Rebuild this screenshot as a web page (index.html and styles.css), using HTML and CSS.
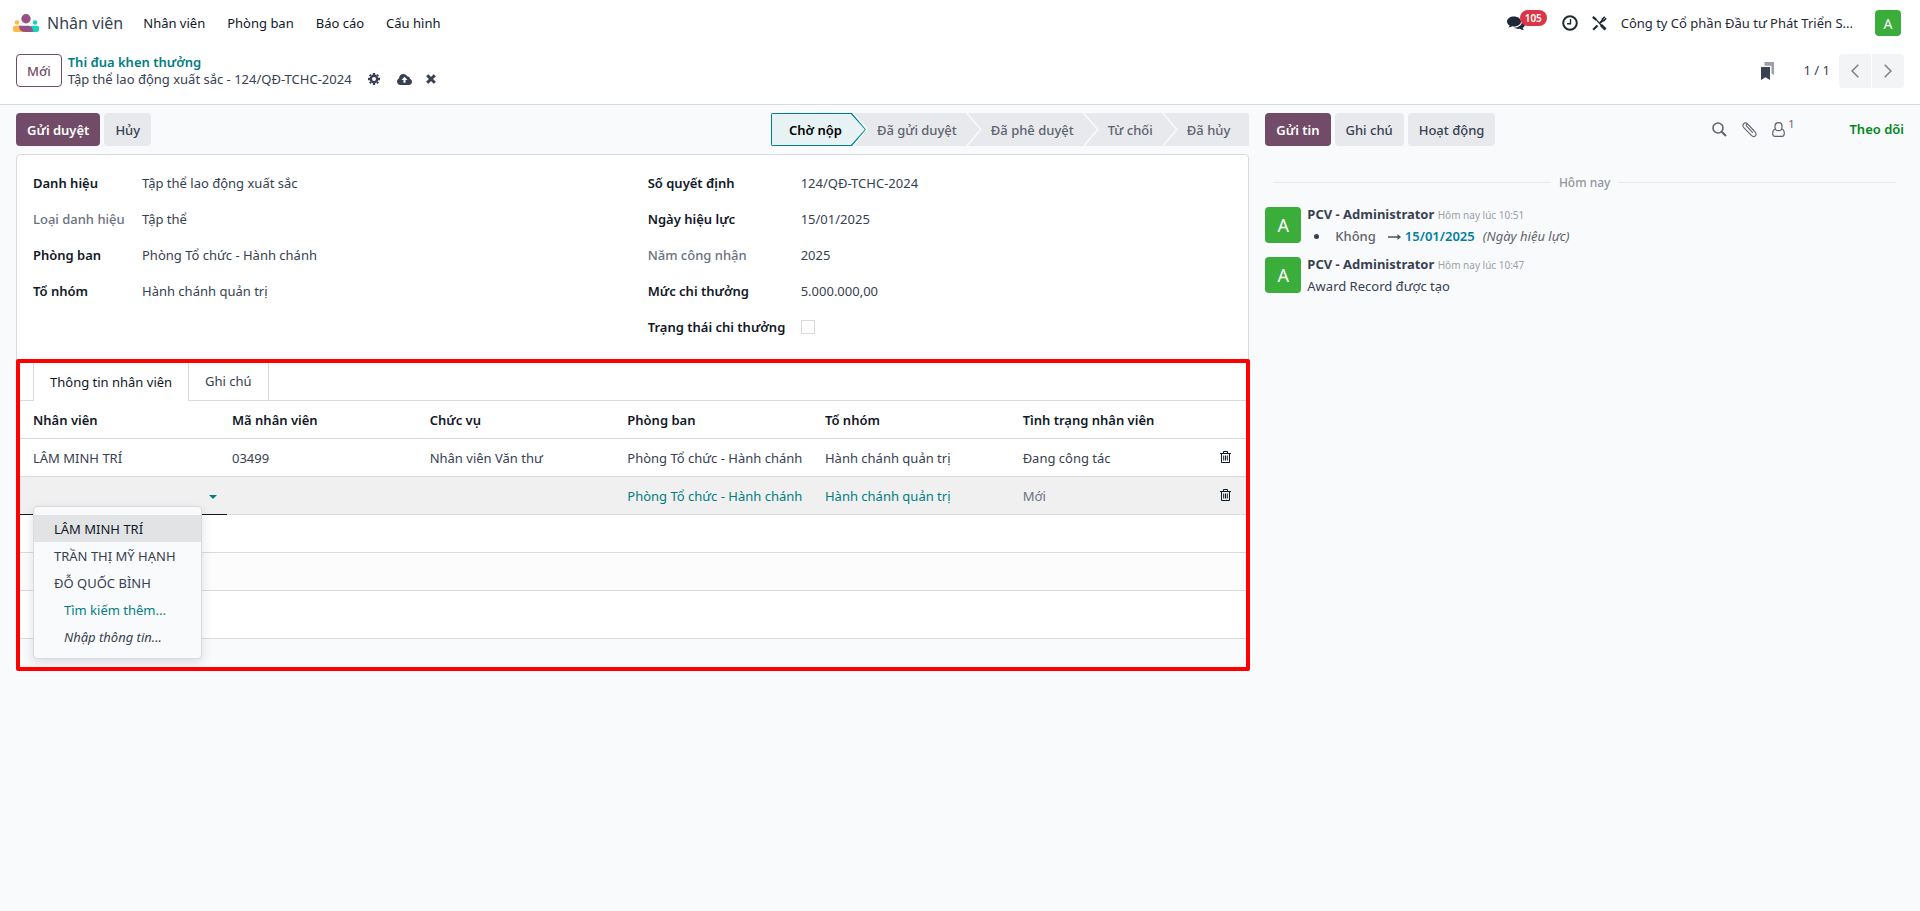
FILE: index.html
```html
<!DOCTYPE html>
<html lang="vi">

<head>
    <meta charset="UTF-8">
    <meta name="viewport" content="width=device-width, initial-scale=1.0">
    <title>Nhân viên - Thi đua khen thưởng</title>
    <link rel="stylesheet" href="styles.css">
</head>

<body>
    <header class="navbar">
        <a class="brand" href="#">
            <svg class="brand-logo" width="26" height="18" viewBox="0 0 26 18">
                <circle cx="4" cy="8.500" r="2.300" fill="#fbb945"/>
                <circle cx="22" cy="8.500" r="2.300" fill="#1ad3bb"/>
                <path d="M0 13.500Q0 11.700 2 11.700H8L16 18H2Q0 18 0 16Z" fill="#fbb945"/>
                <path d="M26 13.500Q26 11.700 24 11.700H18L16 18H24Q26 18 26 16Z" fill="#1ad3bb"/>
                <circle cx="13" cy="4.700" r="4.700" fill="#985184"/>
                <path d="M6 11.700H16Q20 12 20 18H13Q6 18 6 11.700Z" fill="#985184"/>
            </svg>
            <span>Nhân viên</span>
        </a>
        <nav class="menu">
            <a href="#">Nhân viên</a>
            <a href="#">Phòng ban</a>
            <a href="#">Báo cáo</a>
            <a href="#">Cấu hình</a>
        </nav>
        <div class="systray">
            <button class="tray-btn messages" aria-label="Tin nhắn">
                <svg width="18" height="15" viewBox="0 0 18 15" fill="#1f2937">
                    <path d="M7 0.500C3.100 0.500 0 2.600 0 5.500C0 7.100 1 8.500 2.600 9.400C2.400 10.200 1.900 10.900 1.300 11.500C2.900 11.400 4.200 10.900 5.200 10.300C5.800 10.400 6.400 10.500 7 10.500C10.900 10.500 14 8.300 14 5.500S10.900 0.500 7 0.500Z"/>
                    <path d="M15.200 4.700C15.300 8.600 11.800 11.600 7 11.700C8.200 12.500 9.800 12.900 11.400 12.900C12 12.900 12.500 12.900 13 12.800C14 13.600 15.400 14.100 16.800 14.100C16.200 13.500 15.800 12.900 15.600 12.100C17 11.300 18 10 18 8.600C18 7 16.900 5.600 15.200 4.700Z"/>
                </svg>
                <span class="badge">105</span>
            </button>
            <button class="tray-btn" aria-label="Hoạt động">
                <svg width="16" height="16" viewBox="0 0 16 16" fill="none" stroke="#1f2937" stroke-width="2">
                    <circle cx="8" cy="8" r="6.800"/>
                    <path d="M8.500 4V8.700H5" stroke-width="1.400"/>
                </svg>
            </button>
            <button class="tray-btn" aria-label="Công cụ">
                <svg width="15" height="15" viewBox="0 0 15 15" fill="none" stroke="#1f2937">
                    <path d="M0.800 0.800L4.500 4" stroke-width="2.200"/>
                    <path d="M4.500 4L9.500 9.500" stroke-width="1.200"/>
                    <path d="M9 9L13.500 13.500" stroke-width="2.800"/>
                    <path d="M1.200 13.800L5.500 9.500M8 7L10.500 4.500" stroke-width="2.200"/>
                    <path d="M12.800 0.800L10.400 3.200V4.600H11.800L14.200 2.200" stroke-width="1.600"/>
                </svg>
            </button>
            <button class="tray-btn company">Công ty Cổ phần Đầu tư Phát Triển S...</button>
            <button class="avatar avatar-sm">A</button>
        </div>
    </header>

    <div class="control-panel">
        <button class="btn btn-outline">Mới</button>
        <div class="breadcrumb">
            <a href="#">Thi đua khen thưởng</a>
            <div class="breadcrumb-current">
                <span class="record-name">Tập thể lao động xuất sắc - 124/QĐ-TCHC-2024</span>
                <button class="icon-btn" aria-label="Thao tác">
                    <svg width="12" height="12" viewBox="0 0 12 12" fill="none" stroke="#374151">
                        <circle cx="6" cy="6" r="3.200" stroke-width="2.400"/>
                        <path d="M6 0V2M6 10V12M0 6H2M10 6H12M1.800 1.800L3 3M9 9L10.200 10.200M10.200 1.800L9 3M3 9L1.800 10.200" stroke-width="2.300"/>
                    </svg>
                </button>
                <button class="icon-btn save" aria-label="Lưu">
                    <svg width="15" height="11" viewBox="0 0 15 11">
                        <path d="M3.500 11C1.500 11 0 9.500 0 7.600C0 6.200 0.800 5 2 4.500C2 2 3.900 0 6.400 0C8.200 0 9.700 1 10.400 2.600C11.900 2.200 13.200 3.400 12.900 5C14.200 5.300 15 6.400 15 7.800C15 9.600 13.600 11 11.800 11Z" fill="#374151"/>
                        <path d="M7.500 2.800L4.600 5.900H6.500V8.800H8.500V5.900H10.400Z" fill="#fff"/>
                    </svg>
                </button>
                <button class="icon-btn discard" aria-label="Hủy bỏ">
                    <svg width="10" height="10" viewBox="0 0 10 10" stroke="#374151" stroke-width="3">
                        <path d="M1.200 1.200L8.800 8.800M8.800 1.200L1.200 8.800"/>
                    </svg>
                </button>
            </div>
        </div>
        <div class="pager">
            <button class="icon-btn bookmark" aria-label="Đánh dấu">
                <svg width="13" height="18" viewBox="0 0 13 18">
                    <path d="M3.500 0H13V13L10.500 11.500V3.800H3.500Z" fill="#9a9fab"/>
                    <path d="M0 5H9V18L4.500 15.200L0 18Z" fill="#374151"/>
                </svg>
            </button>
            <span class="pager-value">1 / 1</span>
            <div class="pager-buttons">
                <button aria-label="Trước">
                    <svg width="8" height="14" viewBox="0 0 8 14" fill="none" stroke="#7c7f85" stroke-width="1.500"><path d="M7.300 0.700L1 7L7.300 13.300"/></svg>
                </button>
                <button aria-label="Sau">
                    <svg width="8" height="14" viewBox="0 0 8 14" fill="none" stroke="#7c7f85" stroke-width="1.500"><path d="M0.700 0.700L7 7L0.700 13.300"/></svg>
                </button>
            </div>
        </div>
    </div>

    <main class="content">
        <section class="form-view">
            <div class="statusbar">
                <div class="btn-group">
                    <button class="btn btn-primary">Gửi duyệt</button>
                    <button class="btn btn-secondary">Hủy</button>
                </div>
                <div class="status-steps">
                    <button class="step active"><span>Chờ nộp</span></button>
                    <button class="step">Đã gửi duyệt</button>
                    <button class="step">Đã phê duyệt</button>
                    <button class="step">Từ chối</button>
                    <button class="step">Đã hủy</button>
                </div>
            </div>

            <div class="sheet">
                <div class="groups">
                    <dl class="group group-left">
                        <dt>Danh hiệu</dt>
                        <dd>Tập thể lao động xuất sắc</dd>
                        <dt class="readonly">Loại danh hiệu</dt>
                        <dd>Tập thể</dd>
                        <dt>Phòng ban</dt>
                        <dd>Phòng Tổ chức - Hành chánh</dd>
                        <dt>Tổ nhóm</dt>
                        <dd>Hành chánh quản trị</dd>
                    </dl>
                    <dl class="group group-right">
                        <dt>Số quyết định</dt>
                        <dd>124/QĐ-TCHC-2024</dd>
                        <dt>Ngày hiệu lực</dt>
                        <dd>15/01/2025</dd>
                        <dt class="readonly">Năm công nhận</dt>
                        <dd>2025</dd>
                        <dt>Mức chi thưởng</dt>
                        <dd>5.000.000,00</dd>
                        <dt><label for="paid">Trạng thái chi thưởng</label></dt>
                        <dd><input type="checkbox" id="paid"></dd>
                    </dl>
                </div>

                <div class="notebook">
                    <div class="tabs" role="tablist">
                        <button class="tab active" role="tab">Thông tin nhân viên</button>
                        <button class="tab" role="tab">Ghi chú</button>
                    </div>
                    <table class="list">
                        <thead>
                            <tr>
                                <th class="col-employee">Nhân viên</th>
                                <th>Mã nhân viên</th>
                                <th>Chức vụ</th>
                                <th>Phòng ban</th>
                                <th>Tổ nhóm</th>
                                <th>Tình trạng nhân viên</th>
                                <th class="col-action"></th>
                            </tr>
                        </thead>
                        <tbody>
                            <tr>
                                <td>LÂM MINH TRÍ</td>
                                <td>03499</td>
                                <td>Nhân viên Văn thư</td>
                                <td>Phòng Tổ chức - Hành chánh</td>
                                <td>Hành chánh quản trị</td>
                                <td>Đang công tác</td>
                                <td>
                                    <button class="icon-btn" aria-label="Xóa">
                                        <svg width="11" height="12" viewBox="0 0 11 12" fill="none" stroke="#111827">
                                            <path d="M0 2.500H11M3.500 2.500V0.500H7.500V2.500M1.500 2.500V11.500H9.500V2.500M3.700 4.500V9.500M5.500 4.500V9.500M7.300 4.500V9.500"/>
                                        </svg>
                                    </button>
                                </td>
                            </tr>
                            <tr class="editing">
                                <td class="cell-edit">
                                    <div class="many2one">
                                        <input type="text" aria-label="Nhân viên">
                                        <span class="caret"></span>
                                    </div>
                                    <ul class="dropdown">
                                        <li><a class="selected" href="#">LÂM MINH TRÍ</a></li>
                                        <li><a href="#">TRẦN THỊ MỸ HẠNH</a></li>
                                        <li><a href="#">ĐỖ QUỐC BÌNH</a></li>
                                        <li><a class="more" href="#">Tìm kiếm thêm...</a></li>
                                        <li><a class="hint" href="#">Nhập thông tin...</a></li>
                                    </ul>
                                </td>
                                <td></td>
                                <td></td>
                                <td><a href="#">Phòng Tổ chức - Hành chánh</a></td>
                                <td><a href="#">Hành chánh quản trị</a></td>
                                <td class="muted">Mới</td>
                                <td>
                                    <button class="icon-btn" aria-label="Xóa">
                                        <svg width="11" height="12" viewBox="0 0 11 12" fill="none" stroke="#111827">
                                            <path d="M0 2.500H11M3.500 2.500V0.500H7.500V2.500M1.500 2.500V11.500H9.500V2.500M3.700 4.500V9.500M5.500 4.500V9.500M7.300 4.500V9.500"/>
                                        </svg>
                                    </button>
                                </td>
                            </tr>
                            <tr><td colspan="7"></td></tr>
                            <tr class="striped"><td colspan="7"></td></tr>
                        </tbody>
                    </table>
                </div>
            </div>
        </section>

        <aside class="chatter">
            <div class="chatter-top">
                <div class="btn-group">
                    <button class="btn btn-primary">Gửi tin</button>
                    <button class="btn btn-secondary">Ghi chú</button>
                    <button class="btn btn-secondary">Hoạt động</button>
                </div>
                <div class="chatter-tools">
                    <button class="icon-btn" aria-label="Tìm kiếm">
                        <svg width="15" height="15" viewBox="0 0 15 15" fill="none" stroke="#5f636f" stroke-width="1.600">
                            <circle cx="6" cy="6" r="5"/>
                            <path d="M9.700 9.700L14 14" stroke-width="2"/>
                        </svg>
                    </button>
                    <button class="icon-btn" aria-label="Đính kèm">
                        <svg width="15" height="16" viewBox="0 0 15 16" fill="none" stroke="#5f636f" stroke-width="1.100" stroke-linecap="round">
                            <path d="M10.500 10.300L4.600 4.200C3.300 3 5 1.500 6.200 2.700L13 9.800C15.800 12.900 12.300 16.300 9.400 13.400L2 5.800C-0.900 2.700 2.900 -0.800 5.800 2.100L11.800 8.400"/>
                        </svg>
                    </button>
                    <button class="icon-btn followers" aria-label="Người theo dõi">
                        <svg width="13" height="15" viewBox="0 0 13 15" fill="none" stroke="#5f636f" stroke-width="1.200">
                            <rect x="3" y="0.700" width="7" height="8" rx="3.500"/>
                            <path d="M3.500 7C1.500 7.300 0.700 9 0.700 11.500C0.700 13.200 1.500 14.300 3 14.300H10C11.500 14.300 12.300 13.200 12.300 11.500C12.300 9 11.500 7.300 9.500 7"/>
                        </svg>
                        <sup>1</sup>
                    </button>
                    <button class="follow">Theo dõi</button>
                </div>
            </div>

            <div class="date-separator"><span>Hôm nay</span></div>

            <article class="message">
                <div class="avatar">A</div>
                <div class="message-body">
                    <div class="message-head"><strong>PCV - Administrator</strong> <time>Hôm nay lúc 10:51</time></div>
                    <ul class="tracking">
                        <li>
                            <span class="old-value">Không</span>
                            <svg width="13" height="8" viewBox="0 0 13 8"><path d="M0 3.200H9.500V1L13 4L9.500 7V4.800H0Z" fill="#4b5563"/></svg>
                            <span class="new-value">15/01/2025</span>
                            <em>(Ngày hiệu lực)</em>
                        </li>
                    </ul>
                </div>
            </article>
            <article class="message">
                <div class="avatar">A</div>
                <div class="message-body">
                    <div class="message-head"><strong>PCV - Administrator</strong> <time>Hôm nay lúc 10:47</time></div>
                    <p>Award Record được tạo</p>
                </div>
            </article>
        </aside>
    </main>
</body>

</html>
```

FILE: styles.css
```css
* {
    box-sizing: border-box;
}
body {
    margin: 0;
    min-height: 100vh;
    display: flex;
    flex-direction: column;
    background-color: #f9fafb;
    font-family: "Segoe UI", "Noto Sans", sans-serif;
    font-size: 13px;
    line-height: 21px;
    color: #374151;
}
a {
    color: #017e84;
    text-decoration: none;
}
button {
    padding: 0;
    border: none;
    background: none;
    color: inherit;
    font: inherit;
    cursor: pointer;
}
svg {
    display: block;
    flex: none;
}
ul, dl, dd, p {
    margin: 0;
    padding: 0;
}

/* Navbar */
.navbar {
    display: flex;
    align-items: center;
    height: 46px;
    padding: 0 19px 0 13px;
    background-color: #fff;
}
.brand {
    display: flex;
    align-items: center;
    gap: 8px;
    margin-right: 20px;
    font-size: 16px;
    color: #374151;
}
.menu {
    display: flex;
    gap: 22px;
}
.menu a {
    color: #111827;
}
.systray {
    display: flex;
    align-items: center;
    margin-left: auto;
}
.tray-btn {
    position: relative;
    margin-right: 14px;
    color: #1f2937;
}
.messages {
    margin-right: 37px;
}
.badge {
    position: absolute;
    top: -6px;
    left: 13px;
    padding: 0 5px;
    border-radius: 8px;
    background-color: #dc3545;
    color: #fff;
    font-size: 10px;
    font-weight: 600;
    line-height: 16px;
}
.company {
    margin-right: 22px;
}
.avatar {
    display: flex;
    align-items: center;
    justify-content: center;
    flex: none;
    width: 36px;
    height: 36px;
    border-radius: 4px;
    background-color: #3aad3a;
    color: #fff;
    font-size: 18px;
}
.avatar-sm {
    width: 26px;
    height: 26px;
    font-size: 14px;
}

/* Control panel */
.control-panel {
    display: flex;
    align-items: center;
    height: 59px;
    padding: 0 16px 9px;
    background-color: #fff;
    border-bottom: 1px solid #d8dadd;
}
.btn {
    height: 33px;
    padding: 1px 10px 0;
    border: 1px solid transparent;
    border-radius: 4px;
    font-weight: 500;
    white-space: nowrap;
}
.btn-outline {
    border-color: #714b67;
    color: #714b67;
}
.btn-primary {
    background-color: #714b67;
    color: #fff;
    font-weight: 600;
}
.btn-secondary {
    background-color: #e7e9ed;
    color: #374151;
}
.btn-group {
    display: flex;
    gap: 4px;
}
.breadcrumb {
    margin-left: 6px;
    line-height: 17px;
}
.breadcrumb > a {
    font-weight: 600;
}
.breadcrumb-current {
    display: flex;
    align-items: center;
}
.record-name {
    min-width: 296px;
}
.breadcrumb-current .icon-btn {
    margin-left: 4px;
}
.breadcrumb-current .save {
    margin-left: 17px;
}
.breadcrumb-current .discard {
    margin-left: 14px;
}
.pager {
    display: flex;
    align-items: center;
    margin-left: auto;
}
.pager-value {
    margin: 0 9px 0 30px;
}
.pager-buttons {
    display: flex;
    gap: 1px;
}
.pager-buttons button {
    display: flex;
    align-items: center;
    justify-content: center;
    width: 32px;
    height: 34px;
    background-color: #f3f4f6;
}
.pager-buttons button:first-child {
    border-radius: 4px 0 0 4px;
}
.pager-buttons button:last-child {
    border-radius: 0 4px 4px 0;
}

/* Content */
.content {
    display: flex;
    flex: 1;
    gap: 16px;
    padding: 8px 16px 0;
}
.form-view {
    flex: 56;
    min-width: 0;
}
.statusbar {
    display: flex;
    justify-content: space-between;
    margin-bottom: 8px;
}
.status-steps {
    display: flex;
    border-radius: 2px;
    overflow: hidden;
}
.step {
    height: 33px;
    margin-left: -12px;
    padding: 1px 23px 0;
    background-color: #e7e9ed;
    color: #5f636f;
    font-weight: 500;
    clip-path: polygon(0 0, calc(100% - 14px) 0, 100% 50%, calc(100% - 14px) 100%, 0 100%, 14px 50%);
}
.step:last-child {
    padding-right: 19px;
    clip-path: polygon(0 0, 100% 0, 100% 100%, 0 100%, 14px 50%);
}
.step.active {
    position: relative;
    margin-left: 0;
    padding: 1px 24px 0 18px;
    background-color: #017e84;
    color: #000;
    font-weight: 600;
    clip-path: polygon(0 0, calc(100% - 14px) 0, 100% 50%, calc(100% - 14px) 100%, 0 100%);
}
.step.active::before {
    content: "";
    position: absolute;
    inset: 1px;
    background-color: #e6f2f3;
    clip-path: polygon(0 0, calc(100% - 14px) 0, 100% 50%, calc(100% - 14px) 100%, 0 100%);
}
.step.active span {
    position: relative;
}

/* Sheet */
.sheet {
    padding-bottom: 47px;
    border: 1px solid #d8dadd;
    border-radius: 4px 4px 0 0;
    background-color: #fff;
}
.groups {
    display: grid;
    grid-template-columns: 1fr 1fr;
    padding: 18px 16px 23px;
}
.group {
    display: grid;
    align-content: start;
    row-gap: 15px;
}
.group-left {
    grid-template-columns: 109px 1fr;
}
.group-right {
    grid-template-columns: 153px 1fr;
    margin-left: 15px;
}
.group dt {
    color: #111827;
    font-weight: 600;
}
.group dt.readonly {
    color: #6b7280;
    font-weight: 500;
}
.group input {
    appearance: none;
    display: block;
    width: 14px;
    height: 14px;
    margin: 3px 0;
    border: 1px solid #d8dadd;
    background-color: #fff;
}

/* Notebook */
.notebook {
    position: relative;
}
/* highlight frame over the employee tab */
.notebook::after {
    content: "";
    position: absolute;
    inset: -2px -2px -80px -1px;
    border: 4px solid #f00;
    border-radius: 2px;
    pointer-events: none;
}
.tabs {
    display: flex;
    padding-left: 16px;
    border-bottom: 1px solid #d8dadd;
}
.tab {
    height: 39px;
    padding: 2px 16px 0;
    border-right: 1px solid #d8dadd;
}
.tab.active {
    margin-bottom: -1px;
    height: 40px;
    border-left: 1px solid #d8dadd;
    background-color: #fff;
    color: #111827;
}
.list {
    width: 100%;
    table-layout: fixed;
    border-collapse: separate;
    border-spacing: 0;
}
.list th, .list td {
    height: 38px;
    padding: 2px 5px 0;
    border-bottom: 1px solid #d8dadd;
    text-align: left;
    white-space: nowrap;
}
.list th {
    color: #111827;
    font-weight: 600;
}
.list th:first-child, .list td:first-child {
    padding-left: 16px;
}
.list .col-employee {
    width: 210px;
}
.list .col-action {
    width: 33px;
}
.list .editing {
    background-color: #f0f0f0;
}
.list .striped {
    background-color: #fcfcfc;
}
.list .muted {
    color: #6b7280;
}
.list .cell-edit {
    position: relative;
    border-bottom-color: #111827;
}
.many2one {
    display: flex;
    align-items: center;
    padding-right: 5px;
}
.many2one input {
    flex: 1;
    min-width: 0;
    padding: 0;
    border: none;
    outline: none;
    background: none;
    font: inherit;
}
.caret {
    border: 4px solid transparent;
    border-top-color: #017e84;
    border-bottom: none;
}
.dropdown {
    position: absolute;
    top: 29px;
    left: 16px;
    z-index: 1;
    min-width: 169px;
    padding: 8px 0;
    border: 1px solid #d8dadd;
    border-radius: 4px;
    background-color: #f9fafb;
    box-shadow: 0 4px 12px rgba(0, 0, 0, 0.12);
    list-style: none;
}
.dropdown a {
    display: block;
    padding: 4px 20px 2px;
    color: #374151;
}
.dropdown .selected {
    background-color: #e2e3e5;
    color: #111827;
}
.dropdown .more {
    padding-left: 30px;
    color: #017e84;
}
.dropdown .hint {
    padding-left: 30px;
    font-style: italic;
}

/* Chatter */
.chatter {
    flex: 29;
    min-width: 0;
}
.chatter-top {
    display: flex;
    justify-content: space-between;
    margin-bottom: 26px;
}
.chatter-tools {
    display: flex;
    align-items: center;
    gap: 15px;
}
.followers {
    display: flex;
}
.followers sup {
    margin-left: 3px;
    font-size: 11px;
    line-height: 4px;
    color: #5f636f;
}
.follow {
    margin-left: 40px;
    color: #008818;
    font-weight: 600;
}
.date-separator {
    display: flex;
    align-items: center;
    gap: 8px;
    margin: 0 8px 14px;
    color: #9196a0;
    font-size: 12px;
    font-weight: 500;
}
.date-separator::before, .date-separator::after {
    content: "";
    flex: 1;
    border-top: 1px solid #e7e9ed;
}
.message {
    display: flex;
    gap: 6px;
    min-height: 50px;
}
.message-head {
    margin-top: -2px;
    line-height: 18px;
}
.message-head time {
    color: #9a9fab;
    font-size: 10px;
}
.message-body p, .tracking {
    margin-top: 2px;
}
.tracking li {
    display: flex;
    align-items: center;
    color: #5f636f;
}
.tracking li::before {
    content: "";
    width: 5px;
    height: 5px;
    margin: 0 16px 0 7px;
    border-radius: 50%;
    background-color: #374151;
}
.tracking svg {
    margin: 0 4px 0 12px;
}
.old-value {
    font-weight: 500;
}
.new-value {
    margin-right: 8px;
    color: #017ea0;
    font-weight: 600;
}
```
